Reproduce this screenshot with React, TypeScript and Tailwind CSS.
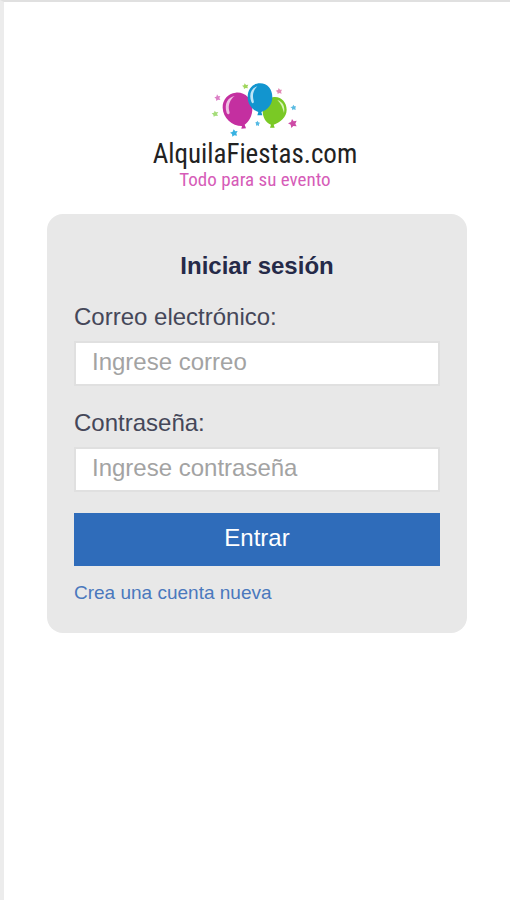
import { useState } from "react";
import type { FormEvent } from "react";

function Logo() {
  return (
    <div className="flex flex-col items-center pr-1 font-['Roboto_Condensed','Roboto',sans-serif]">
      <svg viewBox="0 0 330 195" className="w-[110px] h-[65px]" aria-hidden="true">
        {/* Green balloon */}
        <path
          d="M222 66C244 64 260 82 260 104C260 126 240 143 221 149L224 158H210L213 149C196 142 188 126 188 108C188 84 202 68 222 66Z"
          fill="#7ac925"
        />
        <path d="M232 75C249 80 256 96 252 114C248 98 243 86 232 75Z" fill="#d7f2b5" />
        {/* Pink balloon */}
        <path
          d="M107 53C134 50 156 71 157 98C158 122 146 141 134 149L138 160L124 161L126 153C96 153 69 129 68 98C67 74 84 55 107 53Z"
          fill="#c42fa0"
        />
        <path d="M104 63C83 67 72 86 80 113C85 121 91 118 88 109C83 91 90 73 104 63Z" fill="#f0bfe3" />
        {/* Blue balloon */}
        <path
          d="M180 25C203 25 217 43 217 67C217 89 202 106 184 111L187 121H172L175 111C156 105 143 87 143 66C143 42 158 25 180 25Z"
          fill="#1295cf"
        />
        <path d="M172 34C153 40 146 59 154 80C158 88 163 85 161 77C156 60 160 45 172 34Z" fill="#bfe5f6" />
        {/* Confetti */}
        <path d="M51 58l4 6 6-1-3 6 3 6-7-1-5 4-1-7-5-4 6-2z" fill="#dc7fc6" />
        <path d="M134 25l4 5 7-1-3 6 2 5-7-1-5 3-1-6-5-4 6-1z" fill="#a0d65c" />
        <path d="M236 39l4 5 6 0-3 6 2 6-7-2-5 3-1-6-5-4 7-2z" fill="#e289b6" />
        <path d="M280 89l3 5 5 0-2 5 1 6-6-2-4 3-1-6-5-4 6-1z" fill="#5bbbe2" />
        <path d="M44 107l4 5 7-1-4 6 3 6-7-1-6 3-1-6-5-4 7-2z" fill="#a5dd7a" />
        <path d="M172 137l3 5 5 1-3 5 0 5-5-2-4 1 0-6-2-4 4-1z" fill="#58bbe4" />
        <path d="M101 163l5 6 7-1-4 7 2 7-8-1-6 4-1-8-6-4 8-3z" fill="#38b2e2" />
        <path d="M276 132l5 7 9-2-4 9 4 8-10-1-6 6-2-10-8-4 9-4z" fill="#cd4ba6" />
      </svg>
      <h1 className="text-[27px] leading-7 text-[#222222]">AlquilaFiestas.com</h1>
      <p className="text-[19px] leading-6 text-[#d65cb8]">Todo para su evento</p>
    </div>
  );
}

interface FieldProps {
  id: string;
  label: string;
  type: string;
  placeholder: string;
  value: string;
  onChange: (value: string) => void;
}

function Field({ id, label, type, placeholder, value, onChange }: FieldProps) {
  return (
    <div className="flex flex-col gap-2">
      <label htmlFor={id} className="text-2xl leading-8 text-[#454759]">
        {label}
      </label>
      <input
        id={id}
        type={type}
        placeholder={placeholder}
        value={value}
        onChange={(e) => onChange(e.target.value)}
        className="w-full h-[45px] px-4 pb-1 bg-white border-2 border-[#e0e0e0] text-2xl text-[#454759] placeholder:text-[#a3a3a3]"
      />
    </div>
  );
}

export default function App() {
  const [email, setEmail] = useState("");
  const [password, setPassword] = useState("");

  const handleSubmit = (e: FormEvent) => {
    e.preventDefault();
  };

  return (
    <main className="min-h-screen bg-white border-t-2 border-l-4 border-t-[#e0e0e0] border-l-[#ececec] pt-[73px] font-['Liberation_Sans',Arial,sans-serif]">
      <Logo />

      <form
        onSubmit={handleSubmit}
        className="mx-[43px] mt-[22px] flex flex-col gap-[21px] rounded-2xl bg-[#e8e8e8] px-[27px] pt-[38px] pb-7"
      >
        <h2 className="text-center text-2xl leading-7 font-bold text-[#252a48]">Iniciar sesión</h2>
        <Field
          id="correo"
          label="Correo electrónico:"
          type="email"
          placeholder="Ingrese correo"
          value={email}
          onChange={setEmail}
        />
        <Field
          id="contrasena"
          label="Contraseña:"
          type="password"
          placeholder="Ingrese contraseña"
          value={password}
          onChange={setPassword}
        />
        <div className="flex flex-col items-start gap-[15px]">
          <button type="submit" className="w-full h-[53px] pb-1 bg-[#2f6cba] text-2xl text-white">
            Entrar
          </button>
          <a href="#registro" className="text-[19px] leading-6 text-[#4a78bd]">
            Crea una cuenta nueva
          </a>
        </div>
      </form>
    </main>
  );
}
